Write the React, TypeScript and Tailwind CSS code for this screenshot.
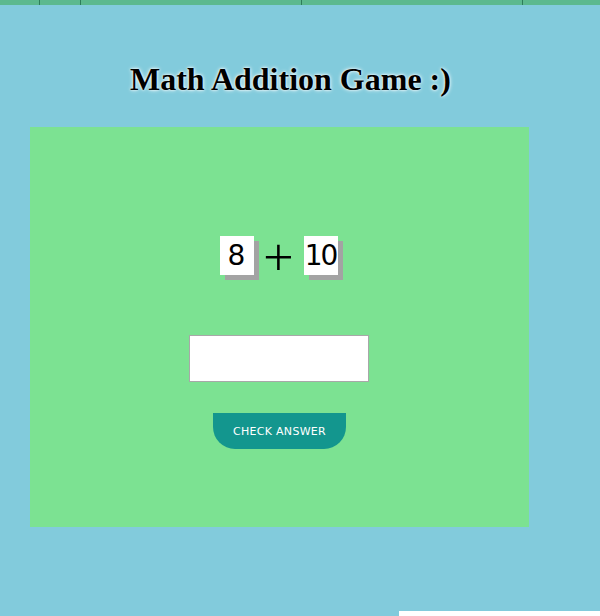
export default function App() {
  return (
    <div className="w-[600px] h-[616px] bg-[#82cbdc] relative overflow-hidden">
      <div className="h-[5px] bg-[#5cb98e] flex">
        <div className="w-[40px] border-r border-[#2e7d5a]" />
        <div className="w-[41px] border-r border-[#2e7d5a]" />
        <div className="w-[221px] border-r border-[#2e7d5a]" />
        <div className="w-[221px] border-r border-[#2e7d5a]" />
        <div className="flex-1" />
      </div>
      <h1
        className="pt-[57px] pl-[130px] text-[32px] font-bold text-black leading-[34px] whitespace-nowrap"
        style={{ fontFamily: '"Liberation Serif", serif', textShadow: '0 0 4px #ffffff, 0 0 2px #ffffff' }}
      >
        Math Addition Game :)
      </h1>
      <div className="ml-[30px] mt-[31px] w-[499px] h-[400px] bg-[#7ce292] flex flex-col items-center pt-[109px]">
        <div className="flex items-center h-[39px] ml-[-2px]" style={{ fontFamily: '"DejaVu Sans", sans-serif' }}>
          <div className="w-[34px] h-[39px] bg-white flex items-center justify-center text-[28px] text-black shadow-[5px_5px_0_#a3a3a3]">8</div>
          <div
            className="w-[50px] h-[39px] flex items-center justify-center text-[54px] leading-none text-black font-light pb-[2px]"
            style={{ fontFamily: '"Noto Sans", sans-serif' }}
          >
            +
          </div>
          <div className="w-[34px] h-[39px] bg-white flex items-center justify-center text-[28px] text-black tracking-[-2px] shadow-[5px_5px_0_#a3a3a3]">10</div>
        </div>
        <input className="mt-[60px] ml-[-2px] w-[180px] h-[47px] bg-white border border-[#a8a8a8] outline-none" />
        <button
          className="mt-[31px] w-[133px] h-[36px] pt-[2px] bg-[#13968e] text-white text-[11px] tracking-[0.3px] rounded-b-[22px]"
          style={{ fontFamily: '"DejaVu Sans", sans-serif' }}
        >
          CHECK ANSWER
        </button>
      </div>
      <div className="absolute left-[399px] top-[611px] w-[201px] h-[5px] bg-white" />
    </div>
  );
}
